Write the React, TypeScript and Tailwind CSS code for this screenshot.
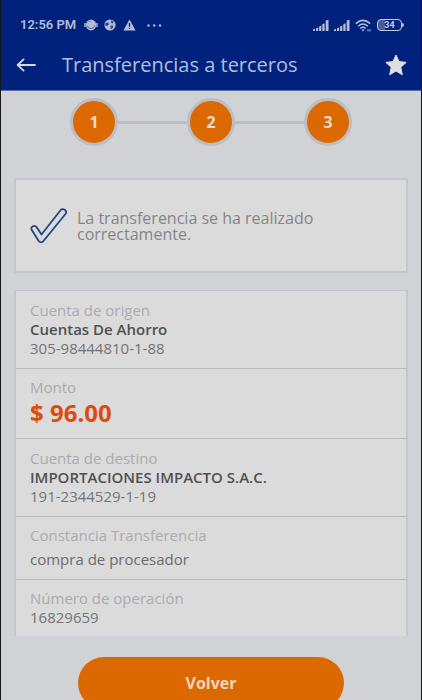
import type { ReactNode } from "react";

function SignalBars() {
  return (
    <svg className="h-3 w-4" viewBox="0 0 16 12" fill="currentColor" aria-hidden="true">
      <path d="M0 12V10.6l2-.8V12z" />
      <path d="M3 12V9.2l2.2-.8V12zM6.1 12V7.4l2.2-1V12zM9.3 12V5.2l2.3-1V12zM12.7 12V1.6l2.8-.8V12z" />
    </svg>
  );
}

function StatusBar() {
  return (
    <div className="flex h-[50px] items-center justify-between pl-[19px] pr-[17px] text-[#b3bcd8]">
      <div className="flex items-center">
        <span className="w-[58px] whitespace-nowrap font-[Roboto,sans-serif] text-[13px] font-semibold leading-4">12:56 PM</span>
        <svg className="ml-[6px] h-3 w-[14px]" viewBox="0 0 14 12" aria-hidden="true">
          <ellipse cx="7" cy="6" rx="5.2" ry="5.4" fill="currentColor" />
          <path d="M1 4v4M13 4v4" stroke="currentColor" strokeWidth="1.4" />
          <path d="M3.2 6.6Q4 9.6 7 9.6T10.8 6.6" fill="none" stroke="#52669f" strokeWidth="1" />
          <path d="M3 4.2Q4.5 1.8 7 1.9" fill="none" stroke="#7c8bb6" strokeWidth="1" />
        </svg>
        <svg className="ml-[6px] h-3 w-3" viewBox="0 0 12 12" aria-hidden="true">
          <circle cx="6" cy="6" r="5.6" fill="currentColor" />
          <path d="M1.3 4.2 4 3.2 5 5.2 3.4 7 1 6.6zM7.2 1.2 10 3 8.6 4.6 6.8 3.6zM6.6 6.4 9.4 6.6 8.6 9.6 6.4 10z" fill="#2f4890" />
        </svg>
        <svg className="ml-[7px] h-3 w-[13px]" viewBox="0 0 13 12" aria-hidden="true">
          <path d="M6.5.4 12.6 11.4H.4z" fill="currentColor" />
          <path d="M6.5 4v3.8M6.5 8.7v1.4" stroke="#00227d" strokeWidth="1.3" />
        </svg>
        <svg className="ml-[11px] h-[3px] w-[15px]" viewBox="0 0 15 3" fill="currentColor" aria-hidden="true">
          <circle cx="1.5" cy="1.5" r="1.2" />
          <circle cx="7.2" cy="1.5" r="1.2" />
          <circle cx="13" cy="1.5" r="1.2" />
        </svg>
      </div>
      <div className="flex items-center gap-[5px]">
        <SignalBars />
        <SignalBars />
        <svg className="h-[13px] w-[17px]" viewBox="0 0 17 13" fill="none" stroke="currentColor" strokeWidth="1.5" aria-hidden="true">
          <path d="M.8 4.6Q8 -1.8 15.2 4.6M3.2 7.2Q8 2.8 12.8 7.2M5.4 9.4Q8 7 10.6 9.4" />
          <path d="M6.3 10.6h3.4L8 12.4z" fill="currentColor" stroke="none" />
          <path d="M13 10.2v2.2M15 10.2v2.2" strokeWidth="1" />
        </svg>
        <div className="flex items-center">
          <span className="flex h-3 w-[25px] items-center justify-center rounded-[4px] border border-current bg-[linear-gradient(90deg,#475c9c_30%,transparent_30%)] font-[Roboto,sans-serif] text-[9px] font-bold leading-none text-[#c5cce0]">
            34
          </span>
          <span className="h-1 w-[2px] rounded-r bg-current" />
        </div>
      </div>
    </div>
  );
}

function AppHeader() {
  return (
    <header className="border-b border-[#5a6ca6] bg-[#00227d]">
      <StatusBar />
      <div className="flex h-10 items-start px-[14px]">
        <button type="button" aria-label="Atrás" className="ml-px mt-2 text-[#d3d7e2]">
          <svg className="h-[14px] w-5" viewBox="0 0 20 14" fill="none" stroke="currentColor" strokeWidth="1.8" strokeLinecap="round" strokeLinejoin="round">
            <path d="M19 7H2M7.6 1.4 1.6 7l6 5.6" />
          </svg>
        </button>
        <h1 className="ml-[26px] flex-1 text-[20px] leading-[30px] text-[#b4bedb]">Transferencias a terceros</h1>
        <button type="button" aria-label="Favorito" className="mt-1 text-[#dedfe0]">
          <svg className="h-[22px] w-[22px]" viewBox="0 0 22 22" fill="currentColor" stroke="currentColor" strokeWidth="1" strokeLinejoin="round">
            <path d="M11 1 14 7.6 21.2 8.4 15.8 13.2 17.3 20.8 11 17 4.7 20.8 6.2 13.2.8 8.4 8 7.6z" />
          </svg>
        </button>
      </div>
    </header>
  );
}

function Step({ children }: { children: ReactNode }) {
  return (
    <li className="flex size-12 items-center justify-center rounded-full border-[3px] border-[#bdbec4] bg-[#dc6900] text-[16px] font-bold text-[#eddccb]">
      {children}
    </li>
  );
}

function Steps() {
  return (
    <ol className="mx-[69px] mt-[7px] flex items-center">
      <Step>1</Step>
      <li aria-hidden="true" className="h-[3px] flex-1 bg-[#bdbec4]" />
      <Step>2</Step>
      <li aria-hidden="true" className="h-[3px] flex-1 bg-[#bdbec4]" />
      <Step>3</Step>
    </ol>
  );
}

function Row({ label, padding = "py-[10px]", children }: { label: string; padding?: string; children: ReactNode }) {
  return (
    <div className={`border-b border-[#b9babc] px-[14px] last:border-b-0 ${padding}`}>
      <dt className="text-[#ababad]">{label}</dt>
      {children}
    </div>
  );
}

export default function App() {
  return (
    <div className="flex h-screen flex-col overflow-hidden border-x border-[#15181f] bg-[#d1d2d6] font-['Open_Sans','Noto_Sans',sans-serif]">
      <AppHeader />
      <main className="flex-1">
        <Steps />
        <section className="mx-[13px] mt-8 flex h-[95px] items-center border-2 border-[#c4c6cc] bg-[#dbdbdb] pl-[14px]">
          <svg className="h-9 w-[38px] shrink-0" viewBox="0 0 38 36" fill="none" stroke="#234480" strokeWidth="1.8" strokeLinejoin="round" aria-hidden="true">
            <path d="M1.5 21.5c-1-3 3-5 5-2.5l5 7.5L30.5 2.2c2.4-2.4 7 .2 5.2 3.6L13.5 33c-1.4 1.7-3.4 1.7-4.8 0z" />
          </svg>
          <p className="ml-[9px] max-w-[270px] text-[16px] leading-4 text-[#858587]">
            La transferencia se ha realizado correctamente.
          </p>
        </section>
        <dl className="mx-[13px] mt-[17px] border-x-2 border-t border-[#c4c6cc] bg-[#dbdbdb] text-[15px] leading-[19px] text-[#747476]">
          <Row label="Cuenta de origen">
            <dd className="font-semibold text-[#505052]">Cuentas De Ahorro</dd>
            <dd>305-98444810-1-88</dd>
          </Row>
          <Row label="Monto" padding="py-[9px]">
            <dd className="text-[24px] font-bold leading-8 text-[#dc4c0c]">$ 96.00</dd>
          </Row>
          <Row label="Cuenta de destino">
            <dd className="font-semibold text-[#505052]">IMPORTACIONES IMPACTO S.A.C.</dd>
            <dd>191-2344529-1-19</dd>
          </Row>
          <Row label="Constancia Transferencia" padding="pt-[9px] pb-[10px]">
            <dd className="mt-[5px] text-[#6c6c6e]">compra de procesador</dd>
          </Row>
          <Row label="Número de operación" padding="pt-[9px] pb-[9px]">
            <dd>16829659</dd>
          </Row>
        </dl>
        <div className="mx-[77px] mt-[21px]">
          <button type="button" className="h-[52px] w-full rounded-full bg-[#dc6900] text-[16px] font-bold text-[#eed5bd]">
            Volver
          </button>
        </div>
      </main>
    </div>
  );
}
